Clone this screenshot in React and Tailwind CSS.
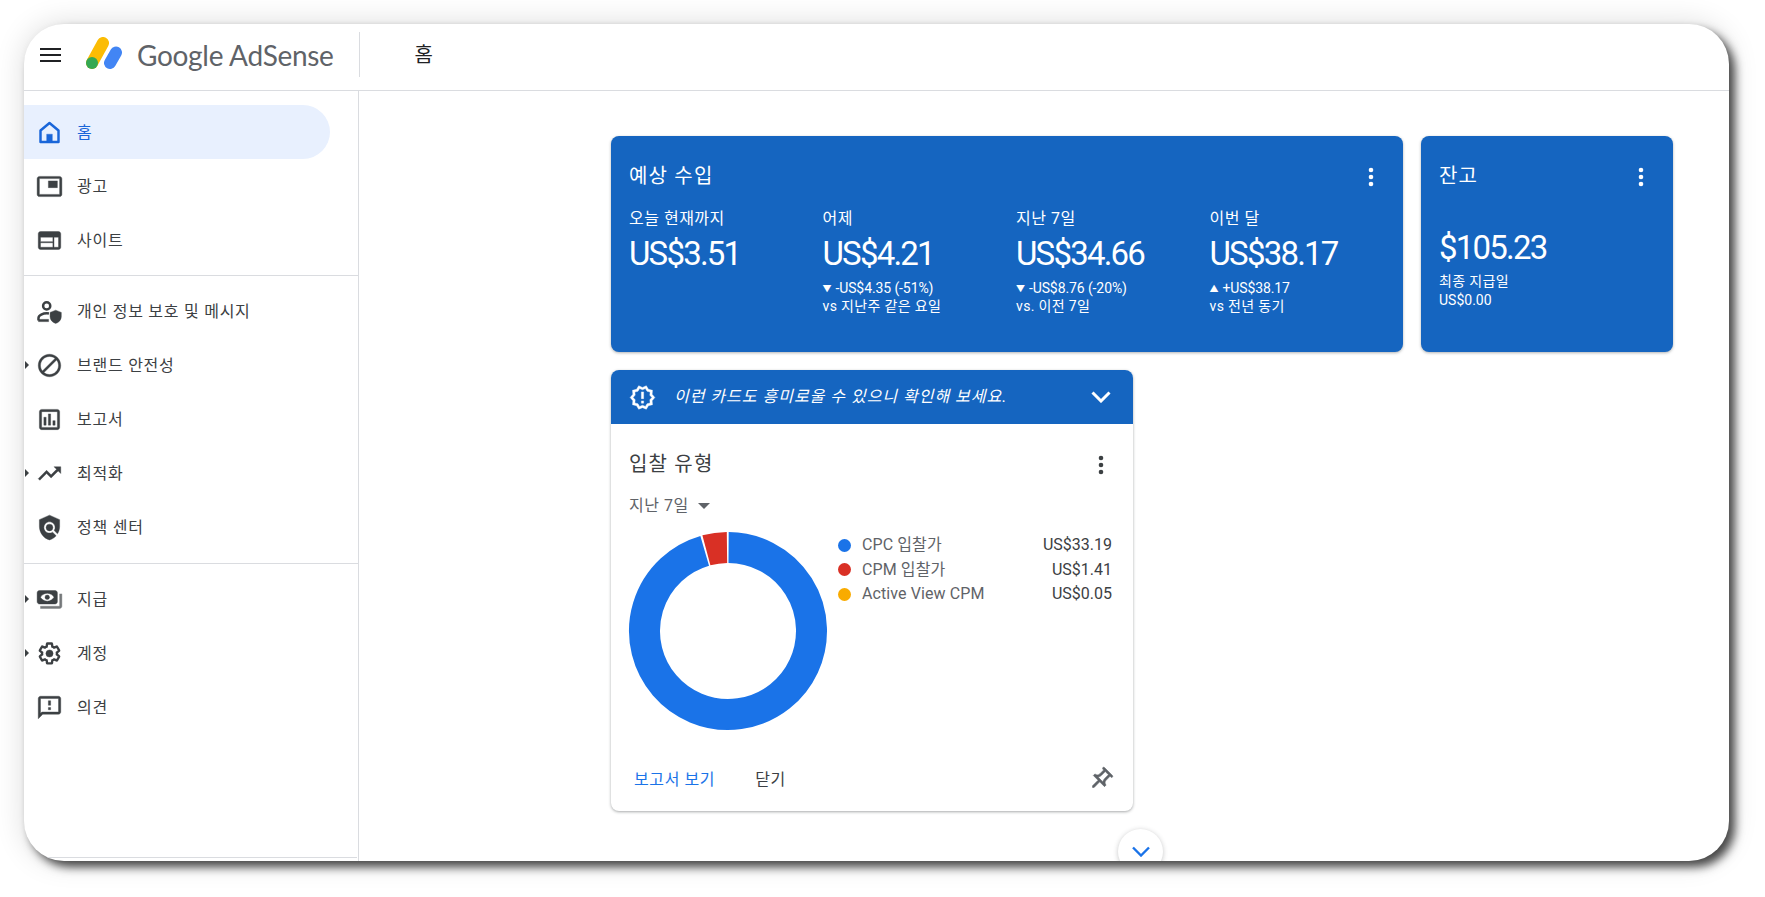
const SETTINGS_D =
  "M19.43 12.98c.04-.32.07-.64.07-.98s-.03-.66-.07-.98l2.11-1.65c.19-.15.24-.42.12-.64l-2-3.46c-.12-.22-.39-.3-.61-.22l-2.49 1c-.52-.4-1.08-.73-1.69-.98l-.38-2.65C14.46 2.18 14.25 2 14 2h-4c-.25 0-.46.18-.49.42l-.38 2.65c-.61.25-1.17.59-1.69.98l-2.49-1c-.23-.09-.49 0-.61.22l-2 3.46c-.13.22-.07.49.12.64l2.11 1.65c-.04.32-.07.65-.07.98s.03.66.07.98l-2.11 1.65c-.19.15-.24.42-.12.64l2 3.46c.12.22.39.3.61.22l2.49-1c.52.4 1.08.73 1.69.98l.38 2.65c.03.24.24.42.49.42h4c.25 0 .46-.18.49-.42l.38-2.65c.61-.25 1.17-.59 1.69-.98l2.49 1c.23.09.49 0 .61-.22l2-3.46c.12-.22.07-.49-.12-.64l-2.11-1.65z";

const icons = {
  home: (
    <>
      <path d="M12 3.6l8 6.6V20.5H4V10.2z" fill="none" stroke="currentColor" strokeWidth="2.2" strokeLinejoin="round" />
      <path d="M9.5 13.5h5v7h-5z" />
    </>
  ),
  ads: <path d="M19 7h-8v6h8V7zm2-4H3c-1.1 0-2 .9-2 2v14c0 1.1.9 1.98 2 1.98h18c1.1 0 2-.88 2-1.98V5c0-1.1-.9-2-2-2zm0 16.01H3V4.98h18v14.03z" />,
  web: <path d="M20 4H4c-1.1 0-1.99.9-1.99 2L2 18c0 1.1.9 2 2 2h16c1.1 0 2-.9 2-2V6c0-1.1-.9-2-2-2zm-5 14H4v-4h11v4zm0-5H4V9h11v4zm5 5h-4V9h4v9z" />,
  privacy: (
    <>
      <circle cx="9.5" cy="7" r="3.2" fill="none" stroke="currentColor" strokeWidth="2.2" />
      <path d="M2.2 20v-2.2c0-2.6 4-4.2 7.5-4.2.6 0 1.2 0 1.8.1" fill="none" stroke="currentColor" strokeWidth="2.2" />
      <path d="M2.2 19h9v2h-9z" />
      <path d="M17.5 10.8l5 2v3.6c0 3-2.2 5.5-5 6.2-2.8-.7-5-3.2-5-6.2v-3.6z" />
    </>
  ),
  block: <path d="M12 2C6.48 2 2 6.48 2 12s4.48 10 10 10 10-4.48 10-10S17.52 2 12 2zM4 12c0-4.42 3.58-8 8-8 1.85 0 3.55.63 4.9 1.69L5.69 16.9C4.63 15.55 4 13.85 4 12zm8 8c-1.85 0-3.55-.63-4.9-1.69L18.31 7.1C19.37 8.45 20 10.15 20 12c0 4.42-3.58 8-8 8z" />,
  report: <path d="M19 3H5c-1.1 0-2 .9-2 2v14c0 1.1.9 2 2 2h14c1.1 0 2-.9 2-2V5c0-1.1-.9-2-2-2zm0 16H5V5h14v14zM7 10h2v7H7zm4-3h2v10h-2zm4 6h2v4h-2z" />,
  trend: <path d="M16 6l2.29 2.29-4.88 4.88-4-4L2 16.59 3.41 18l6-6 4 4 6.3-6.29L22 12V6z" />,
  policy: (
    <>
      <path d="M21 5l-9-4-9 4v6c0 5.55 3.84 10.74 9 12 2.3-.56 4.33-1.9 5.88-3.71l-3.12-3.12c-1.94 1.29-4.58 1.07-6.29-.64-1.95-1.95-1.95-5.12 0-7.07 1.95-1.95 5.12-1.95 7.07 0 1.71 1.71 1.92 4.35.64 6.29l2.9 2.9C20.29 15.69 21 13.38 21 11V5z" />
      <circle cx="12" cy="12" r="3" />
    </>
  ),
  payments: (
    <>
      <path fillRule="evenodd" d="M19 14V6c0-1.1-.9-2-2-2H3c-1.1 0-2 .9-2 2v8c0 1.1.9 2 2 2h14c1.1 0 2-.9 2-2zM10 6.5c3 0 5.2 2 6 3.5-.8 1.5-3 3.5-6 3.5S4.8 11.5 4 10c.8-1.5 3-3.5 6-3.5z" />
      <circle cx="10" cy="10" r="2" />
      <path d="M23 7v11c0 1.1-.9 2-2 2H4v-2h17V7h2z" opacity="0.7" />
    </>
  ),
  settings: (
    <>
      <path d={SETTINGS_D} transform="translate(1.4 1.4) scale(0.883)" fill="none" stroke="currentColor" strokeWidth="2.4" />
      <circle cx="12" cy="12" r="3.2" />
    </>
  ),
  feedback: <path d="M20 2H4c-1.1 0-1.99.9-1.99 2L2 22l4-4h14c1.1 0 2-.9 2-2V4c0-1.1-.9-2-2-2zm0 14H5.17L4 17.17V4h16v12zm-9-4h2v2h-2zm0-6h2v4h-2z" />,
};

const Icon = ({ name, className }) => (
  <svg viewBox="0 0 24 24" fill="currentColor" stroke="currentColor" strokeWidth="0.35" className={className}>
    {icons[name]}
  </svg>
);

const Dots = ({ className }) => (
  <svg viewBox="0 0 6 20" fill="currentColor" className={`h-[20px] w-[6px] ${className}`}>
    <circle cx="3" cy="3" r="2.3" />
    <circle cx="3" cy="10" r="2.3" />
    <circle cx="3" cy="17" r="2.3" />
  </svg>
);

const NavItem = ({ icon, label, active, expand }) => (
  <div
    className={`relative flex h-[54px] w-[306px] items-center rounded-r-[27px] pl-[12px] ${
      active ? "bg-[#e8f0fe] text-[#1a66d9]" : "text-[#3c4043]"
    }`}
  >
    {expand && (
      <span className="absolute left-[1px] top-[23px] h-0 w-0 border-y-[4px] border-l-[4px] border-y-transparent border-l-[#3c4043]" />
    )}
    <Icon name={icon} className="h-[27px] w-[27px] shrink-0" />
    <span className="ml-[14px] pt-[1px] text-[16px] leading-none tracking-[0.75px]">{label}</span>
  </div>
);

const Stat = ({ label, value, arrow, delta, note }) => (
  <div className="w-[193.5px] shrink-0">
    <div className="h-[24px] text-[16px] leading-[24px] tracking-[0.5px]">{label}</div>
    <div className="mt-[2px] h-[42px] text-[33px] leading-[42px] tracking-[-1.8px]">{value}</div>
    {delta && (
      <div className="mt-[5px] text-[14px] leading-[17px] tracking-[-0.1px]">
        <div>
          <span className="mr-[4px] align-[1px] text-[9px]">{arrow}</span>
          {delta}
        </div>
        <div className="tracking-[0.35px]">{note}</div>
      </div>
    )}
  </div>
);

const arc = (from, to, r = 83.5) => {
  const pt = (a) => {
    const rad = ((a - 90) * Math.PI) / 180;
    return `${100 + r * Math.cos(rad)} ${100 + r * Math.sin(rad)}`;
  };
  return `M${pt(from)}A${r} ${r} 0 ${to - from > 180 ? 1 : 0} 1 ${pt(to)}`;
};

const Donut = () => (
  <svg viewBox="0 0 200 200" fill="none" strokeWidth="31" className="-ml-[1px] h-[200px] w-[200px] shrink-0">
    <path d={arc(0.4, 343.8)} stroke="#1a73e8" />
    <path d={arc(345, 359.3)} stroke="#d93025" />
  </svg>
);

const LegendRow = ({ color, label, value }) => (
  <div className="flex h-[24.5px] items-center text-[16px]">
    <span className={`h-[13px] w-[13px] rounded-full ${color}`} />
    <span className="ml-[11px] tracking-[0.1px] text-[#5f6368]">{label}</span>
    <span className="ml-auto text-[#3c4043]">{value}</span>
  </div>
);

export default function App() {
  return (
    <div className="h-[897px] w-full overflow-hidden bg-white pl-[24px] pt-[24px] font-[Roboto,'Noto_Sans_CJK_KR',sans-serif]">
      <div className="relative flex h-[837px] w-[1705px] flex-col overflow-hidden rounded-[40px] bg-white shadow-[6px_6px_10px_rgba(0,0,0,0.7),0_0_30px_rgba(0,0,0,0.14)]">
        {/* top bar */}
        <header className="flex h-[67px] shrink-0 items-center border-b border-[#dadce0] pb-[5px]">
          <button className="ml-[16px] flex h-[14px] w-[21px] flex-col justify-between">
            <span className="h-[2px] w-full bg-[#202124]" />
            <span className="h-[2px] w-full bg-[#202124]" />
            <span className="h-[2px] w-full bg-[#202124]" />
          </button>
          <svg viewBox="0 0 37 33" className="mb-[2px] ml-[25px] h-[33px] w-[37px] shrink-0">
            <path d="M6 26L17 6" stroke="#fbbc04" strokeWidth="12" strokeLinecap="round" />
            <circle cx="6" cy="26" r="6" fill="#34a853" />
            <path d="M24 26L30 15.5" stroke="#4285f4" strokeWidth="12" strokeLinecap="round" />
          </svg>
          <span className="ml-[14px] whitespace-nowrap font-[Lato,sans-serif] text-[28px] leading-none tracking-[-0.3px] text-[#5f6368]">
            Google AdSense
          </span>
          <div className="ml-[25px] h-[45px] border-l border-[#dadce0]" />
          <h1 className="ml-[55px] text-[20px] leading-none text-[#202124]">홈</h1>
        </header>

        <div className="flex min-h-0 flex-1">
          {/* sidebar */}
          <aside className="flex w-[335px] shrink-0 flex-col border-r border-[#dadce0] pt-[14px]">
            <NavItem icon="home" label="홈" active />
            <NavItem icon="ads" label="광고" />
            <NavItem icon="web" label="사이트" />
            <div className="my-[8px] border-t border-[#dadce0]" />
            <NavItem icon="privacy" label="개인 정보 보호 및 메시지" />
            <NavItem icon="block" label="브랜드 안전성" expand />
            <NavItem icon="report" label="보고서" />
            <NavItem icon="trend" label="최적화" expand />
            <NavItem icon="policy" label="정책 센터" />
            <div className="mb-[8px] mt-[9px] border-t border-[#dadce0]" />
            <NavItem icon="payments" label="지급" expand />
            <NavItem icon="settings" label="계정" expand />
            <NavItem icon="feedback" label="의견" />
            <div className="mr-[1px] mt-auto mb-[3px] border-t border-[#dadce0]" />
          </aside>

          {/* content */}
          <main className="relative flex-1 pl-[252px] pt-[45px]">
            <div className="flex gap-[18px]">
              <section className="h-[216px] w-[792px] rounded-[8px] bg-[#1565c0] px-[18px] pt-[25px] text-white shadow-[0_1px_3px_rgba(60,64,67,0.4)]">
                <div className="flex h-[30px] items-center justify-between">
                  <h2 className="text-[20px] leading-none tracking-[1.2px]">예상 수입</h2>
                  <Dots className="mr-[11px] mt-[2px]" />
                </div>
                <div className="mt-[16px] flex">
                  <Stat label="오늘 현재까지" value="US$3.51" />
                  <Stat label="어제" value="US$4.21" arrow="▼" delta="-US$4.35 (-51%)" note="vs 지난주 같은 요일" />
                  <Stat label="지난 7일" value="US$34.66" arrow="▼" delta="-US$8.76 (-20%)" note="vs. 이전 7일" />
                  <Stat label="이번 달" value="US$38.17" arrow="▲" delta="+US$38.17" note="vs 전년 동기" />
                </div>
              </section>
              <section className="h-[216px] w-[252px] rounded-[8px] bg-[#1565c0] px-[18px] pt-[25px] text-white shadow-[0_1px_3px_rgba(60,64,67,0.4)]">
                <div className="flex h-[30px] items-center justify-between">
                  <h2 className="text-[20px] leading-none tracking-[1.2px]">잔고</h2>
                  <Dots className="mr-[11px] mt-[2px]" />
                </div>
                <div className="mt-[36px] h-[42px] text-[33px] leading-[42px] tracking-[-1.8px]">$105.23</div>
                <div className="mt-[3px] text-[14px] leading-[19px]">
                  <div className="tracking-[0.35px]">최종 지급일</div>
                  <div>US$0.00</div>
                </div>
              </section>
            </div>

            <section className="mt-[18px] h-[441px] w-[522px] overflow-hidden rounded-[8px] bg-white shadow-[0_1px_3px_rgba(60,64,67,0.45)]">
              <div className="flex h-[54px] items-center bg-[#1565c0] pl-[18px] pr-[22px] text-white">
                <svg viewBox="0 0 24 24" fill="currentColor" stroke="currentColor" strokeWidth="0.35" className="h-[27px] w-[27px] shrink-0">
                  <path d="M23 12l-2.44-2.78.34-3.68-3.61-.82-1.89-3.18L12 3 8.6 1.54 6.71 4.72l-3.61.81.34 3.68L1 12l2.44 2.78-.34 3.69 3.61.82 1.89 3.18L12 21l3.4 1.46 1.89-3.18 3.61-.82-.34-3.68L23 12zm-4.51 2.11l.26 2.79-2.74.62-1.43 2.41L12 18.82l-2.58 1.11-1.43-2.41-2.74-.62.26-2.8L3.66 12l1.85-2.12-.26-2.78 2.74-.61 1.43-2.41L12 5.18l2.58-1.11 1.43 2.41 2.74.62-.26 2.79L20.34 12l-1.85 2.11zM11 15h2v2h-2zm0-8h2v6h-2z" />
                </svg>
                <span className="ml-[18px] text-[16px] italic leading-none tracking-[1px]">
                  이런 카드도 흥미로울 수 있으니 확인해 보세요.
                </span>
                <svg viewBox="0 0 20 12" fill="none" stroke="currentColor" strokeWidth="3" className="ml-auto h-[12px] w-[20px]">
                  <path d="M1.5 1.5L10 10l8.5-8.5" />
                </svg>
              </div>

              <div className="px-[18px]">
                <div className="mt-[25px] flex h-[30px] items-center justify-between">
                  <h2 className="text-[20px] leading-none tracking-[1.2px] text-[#3c4043]">입찰 유형</h2>
                  <Dots className="mr-[11px] mt-[2px] text-[#3c4043]" />
                </div>
                <div className="mt-[14px] flex h-[26px] items-center text-[16px] tracking-[0.5px] text-[#5f6368]">
                  지난 7일
                  <span className="ml-[9px] h-0 w-0 border-x-[6px] border-t-[6px] border-x-transparent border-t-[#5f6368]" />
                </div>
                <div className="mt-[12px] flex">
                  <Donut />
                  <div className="ml-[10px] mt-[2px] flex-1 pr-[3px]">
                    <LegendRow color="bg-[#1a73e8]" label="CPC 입찰가" value="US$33.19" />
                    <LegendRow color="bg-[#d93025]" label="CPM 입찰가" value="US$1.41" />
                    <LegendRow color="bg-[#f9ab00]" label="Active View CPM" value="US$0.05" />
                  </div>
                </div>
                <div className="mt-[35px] flex items-center text-[16px] leading-none tracking-[0.6px]">
                  <span className="ml-[5px] text-[#1a73e8]">보고서 보기</span>
                  <span className="ml-[40px] text-[#3c4043]">닫기</span>
                  <svg viewBox="0 0 24 24" fill="#5f6368" stroke="#5f6368" strokeWidth="0.5" className="ml-auto mr-[1px] h-[27px] w-[27px] rotate-45">
                    <path d="M14 4v5c0 1.12.37 2.16 1 3H9c.65-.86 1-1.9 1-3V4h4m3-2H7c-.55 0-1 .45-1 1s.45 1 1 1h1v5c0 1.66-1.34 3-3 3v2h5.97v7l1 1 1-1v-7H19v-2c-1.66 0-3-1.34-3-3V4h1c.55 0 1-.45 1-1s-.45-1-1-1z" />
                  </svg>
                </div>
              </div>
            </section>

            {/* scroll hint, clipped by the window */}
            <button className="absolute left-[759px] top-[738px] flex h-[45px] w-[45px] items-center justify-center rounded-full bg-white shadow-[0_1px_5px_rgba(60,64,67,0.3)]">
              <svg viewBox="0 0 18 11" fill="none" stroke="#1a73e8" strokeWidth="2.4" className="h-[11px] w-[18px]">
                <path d="M1 1.5l8 8 8-8" />
              </svg>
            </button>
          </main>
        </div>
      </div>
    </div>
  );
}
